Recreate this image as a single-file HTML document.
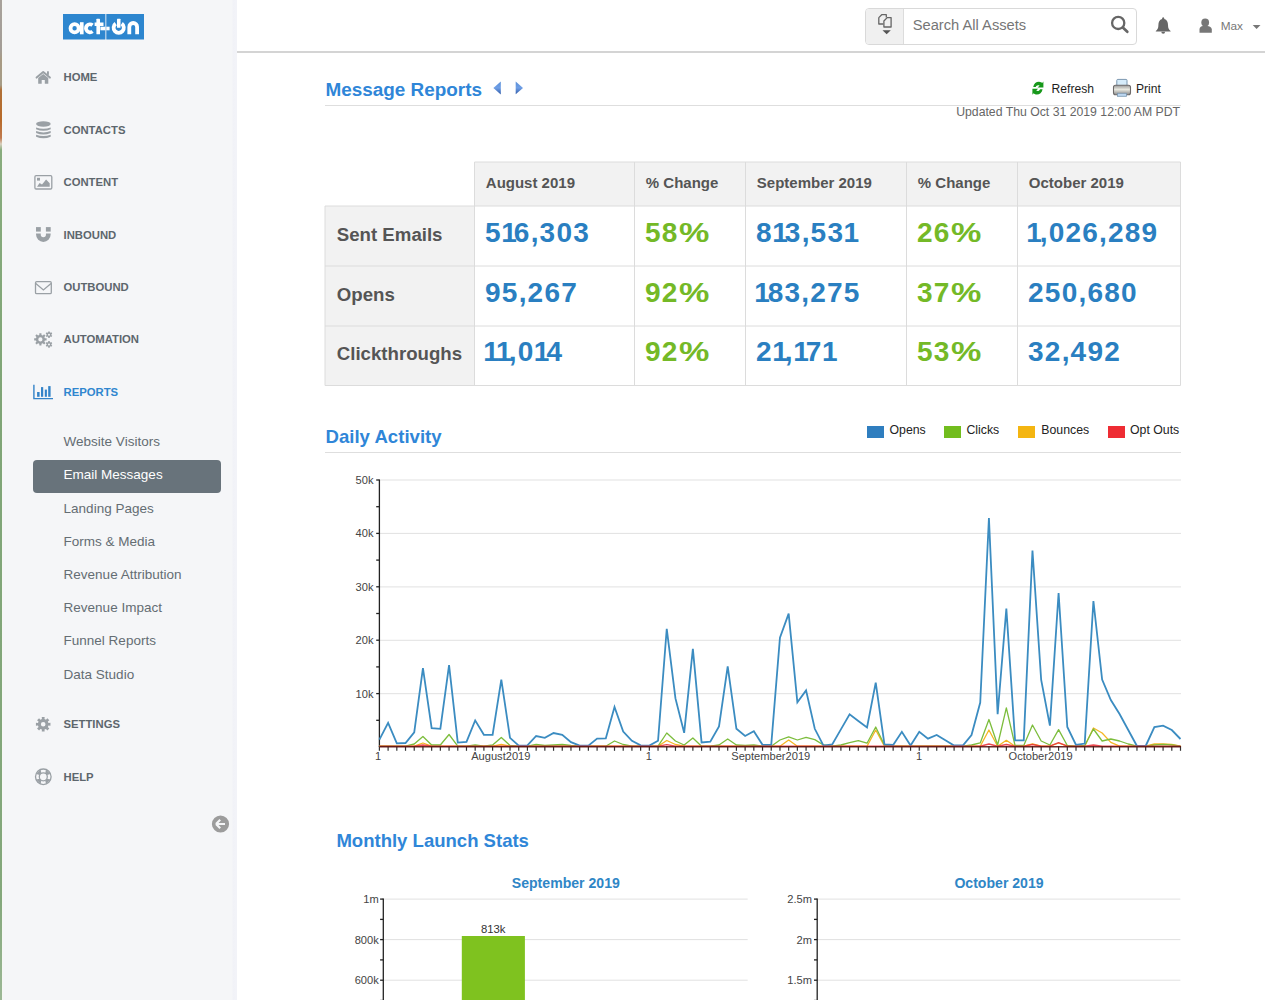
<!DOCTYPE html><html><head><meta charset="utf-8"><style>
*{margin:0;padding:0;box-sizing:border-box}
html,body{width:1265px;height:1000px;overflow:hidden;background:#fff;font-family:"Liberation Sans",sans-serif}
.t{position:absolute;line-height:1;white-space:nowrap}
.abs{position:absolute}
.cell{position:absolute}
.hr{position:absolute;height:1px;background:#dedede}
#strip2{position:absolute;left:1.5px;top:0;width:1.5px;height:1000px;background:#f6f8f4}
#side{position:absolute;left:0;top:0;width:237px;height:1000px;background:linear-gradient(90deg,#f5f6f8 0,#f5f6f8 232px,#f1f2f7 233px,#f2f3f8 236.5px)}
#strip{position:absolute;left:0;top:0;width:1.5px;height:1000px;background:linear-gradient(#a8a29c 0,#a39d97 50px,#a89a84 60px,#a59c88 85px,#b07038 90px,#b86a2a 120px,#c07a50 138px,#d8d0c0 144px,#88ac7e 150px,#7fa577 400px,#84a87c 900px,#9cb896 1000px)}
#hl{position:absolute;left:32.5px;top:460.4px;width:188px;height:32.3px;border-radius:4px;background:#68737b}
#hdrline{position:absolute;left:237px;top:51px;width:1028px;height:2px;background:#d4d4d4}
#search{position:absolute;left:865px;top:8px;width:272px;height:37px;border:1px solid #d9d9d9;border-radius:4px;background:#fff;overflow:hidden}
#sleft{position:absolute;left:0;top:0;width:38px;height:100%;background:#f0f0f0;border-right:1px solid #dcdcdc}
</style></head><body><div id="side"></div>
<div id="strip"></div><div id="strip2"></div>
<svg class="abs" style="left:63px;top:14px" width="81" height="26" viewBox="0 0 81 26">
<rect x="0" y="0" width="42.4" height="25.5" fill="#2d86cf"/>
<rect x="43.3" y="0" width="37.7" height="25.5" fill="#2d86cf"/>
<g fill="none" stroke="#fff" stroke-width="3.8">
<circle cx="11.6" cy="14.3" r="4.1"/>
<path d="M29.5 11.2 A4 4 0 1 0 29.5 17.4"/>
<path d="M52.7 9.6 A5.1 5.1 0 1 0 58.7 9.6"/>
<path d="M66.3 20.3 V12.9 A3.9 3.9 0 0 1 74.1 12.9 V20.3"/>
</g>
<g fill="#fff">
<rect x="16.9" y="8.2" width="3.7" height="12.1"/>
<rect x="33.4" y="4.7" width="3.6" height="15.6" rx="0.6"/>
<rect x="31.6" y="8.5" width="8.9" height="3.5"/>
<rect x="37.4" y="12.7" width="5" height="3.6"/>
<rect x="43.3" y="12.7" width="3.3" height="3.6"/>
<rect x="54" y="4.8" width="3.5" height="9" rx="0.5"/>
</g>
</svg>

<div class="t" style="left:63.50px;top:72px;font-size:11.3px;color:#5d666d;font-weight:bold;">HOME</div>
<div class="t" style="left:63.50px;top:125px;font-size:11.3px;color:#5d666d;font-weight:bold;">CONTACTS</div>
<div class="t" style="left:63.50px;top:177px;font-size:11.3px;color:#5d666d;font-weight:bold;">CONTENT</div>
<div class="t" style="left:63.50px;top:230px;font-size:11.3px;color:#5d666d;font-weight:bold;">INBOUND</div>
<div class="t" style="left:63.50px;top:282px;font-size:11.3px;color:#5d666d;font-weight:bold;">OUTBOUND</div>
<div class="t" style="left:63.50px;top:334px;font-size:11.3px;color:#5d666d;font-weight:bold;">AUTOMATION</div>
<div class="t" style="left:63.50px;top:387px;font-size:11.3px;color:#2f86cf;font-weight:bold;">REPORTS</div>
<div class="t" style="left:63.50px;top:719px;font-size:11.3px;color:#5d666d;font-weight:bold;">SETTINGS</div>
<div class="t" style="left:63.50px;top:772px;font-size:11.3px;color:#5d666d;font-weight:bold;">HELP</div>
<div id="hl"></div>
<div class="t" style="left:63.60px;top:435px;font-size:13.5px;color:#646d73;">Website Visitors</div>
<div class="t" style="left:63.60px;top:468px;font-size:13.5px;color:#ffffff;">Email Messages</div>
<div class="t" style="left:63.60px;top:502px;font-size:13.5px;color:#646d73;">Landing Pages</div>
<div class="t" style="left:63.60px;top:535px;font-size:13.5px;color:#646d73;">Forms &amp; Media</div>
<div class="t" style="left:63.60px;top:568px;font-size:13.5px;color:#646d73;">Revenue Attribution</div>
<div class="t" style="left:63.60px;top:601px;font-size:13.5px;color:#646d73;">Revenue Impact</div>
<div class="t" style="left:63.60px;top:634px;font-size:13.5px;color:#646d73;">Funnel Reports</div>
<div class="t" style="left:63.60px;top:668px;font-size:13.5px;color:#646d73;">Data Studio</div>
<svg class="abs" style="left:0;top:0" width="237" height="1000">
<polyline points="36.6,77.6 43.2,72 49.9,77.6" fill="none" stroke="#9aa0a5" stroke-width="2" stroke-linecap="round" stroke-linejoin="round"/>
<rect x="47" y="71.3" width="1.9" height="3.6" fill="#9aa0a5"/>
<path d="M38.2 83.7 L38.2 78 L43.2 73.9 L48.3 78 L48.3 83.7 L44.8 83.7 L44.8 80 L41.7 80 L41.7 83.7 Z" fill="#9aa0a5"/>
<ellipse cx="43.4" cy="124" rx="7.3" ry="2.7" fill="#9aa0a5"/>
<path d="M36.1 127.4 Q43.4 130.0 50.7 127.4 L50.7 129.3 Q43.4 132.4 36.1 129.3 Z" fill="#9aa0a5"/>
<path d="M36.1 131.1 Q43.4 133.7 50.7 131.1 L50.7 133.0 Q43.4 136.1 36.1 133.0 Z" fill="#9aa0a5"/>
<path d="M36.1 134.8 Q43.4 137.4 50.7 134.8 L50.7 136.70000000000002 Q43.4 139.8 36.1 136.70000000000002 Z" fill="#9aa0a5"/>
<rect x="34.9" y="175.7" width="16.9" height="13.3" rx="1.2" fill="none" stroke="#9aa0a5" stroke-width="1.3"/>
<rect x="37" y="177.8" width="3" height="2.8" fill="#9aa0a5"/>
<path d="M37 186.8 L39.6 183.1 L42 184.6 L46.1 179.5 L49.7 183.3 L49.7 186.8 Z" fill="#9aa0a5"/>
<rect x="36" y="227.1" width="4.8" height="4.5" fill="#9aa0a5"/>
<rect x="45.9" y="227.1" width="4.8" height="4.5" fill="#9aa0a5"/>
<path d="M38.4 233.6 V234.6 A4.95 4.95 0 0 0 48.3 234.6 V233.6" fill="none" stroke="#9aa0a5" stroke-width="4.7"/>
<rect x="35.5" y="281.7" width="15.8" height="12" rx="1.2" fill="none" stroke="#9aa0a5" stroke-width="1.3"/>
<polyline points="35.8,283.6 43.4,290 51,283.6" fill="none" stroke="#9aa0a5" stroke-width="1.3"/>
<path fill-rule="evenodd" d="M39.29 334.94 L39.37 333.19 L41.43 333.19 L41.51 334.94 L42.77 335.46 L44.06 334.27 L45.53 335.74 L44.34 337.03 L44.86 338.29 L46.61 338.37 L46.61 340.43 L44.86 340.51 L44.34 341.77 L45.53 343.06 L44.06 344.53 L42.77 343.34 L41.51 343.86 L41.43 345.61 L39.37 345.61 L39.29 343.86 L38.03 343.34 L36.74 344.53 L35.27 343.06 L36.46 341.77 L35.94 340.51 L34.19 340.43 L34.19 338.37 L35.94 338.29 L36.46 337.03 L35.27 335.74 L36.74 334.27 L38.03 335.46 Z M42.50 339.40 A2.1 2.1 0 1 0 38.30 339.40 A2.1 2.1 0 1 0 42.50 339.40 Z" fill="#9aa0a5"/>
<path fill-rule="evenodd" d="M48.20 332.33 L48.21 331.39 L49.79 331.39 L49.80 332.33 L50.65 332.82 L51.47 332.36 L52.26 333.73 L51.45 334.21 L51.45 335.19 L52.26 335.67 L51.47 337.04 L50.65 336.58 L49.80 337.07 L49.79 338.01 L48.21 338.01 L48.20 337.07 L47.35 336.58 L46.53 337.04 L45.74 335.67 L46.55 335.19 L46.55 334.21 L45.74 333.73 L46.53 332.36 L47.35 332.82 Z M50.00 334.70 A1.0 1.0 0 1 0 48.00 334.70 A1.0 1.0 0 1 0 50.00 334.70 Z" fill="#9aa0a5"/>
<path fill-rule="evenodd" d="M48.20 342.03 L48.21 341.09 L49.79 341.09 L49.80 342.03 L50.65 342.52 L51.47 342.06 L52.26 343.43 L51.45 343.91 L51.45 344.89 L52.26 345.37 L51.47 346.74 L50.65 346.28 L49.80 346.77 L49.79 347.71 L48.21 347.71 L48.20 346.77 L47.35 346.28 L46.53 346.74 L45.74 345.37 L46.55 344.89 L46.55 343.91 L45.74 343.43 L46.53 342.06 L47.35 342.52 Z M50.00 344.40 A1.0 1.0 0 1 0 48.00 344.40 A1.0 1.0 0 1 0 50.00 344.40 Z" fill="#9aa0a5"/>
<path d="M33.2 384.7 H34.6 V397.9 H53 V399.3 H33.2 Z" fill="#3483c8"/>
<rect x="37.1" y="392" width="2.5" height="4.8" fill="#3483c8"/>
<rect x="41" y="387.1" width="2.2" height="9.7" fill="#3483c8"/>
<rect x="44.8" y="389.6" width="2.1" height="7.2" fill="#3483c8"/>
<rect x="48.2" y="386.1" width="2.4" height="10.7" fill="#3483c8"/>
<path fill-rule="evenodd" d="M41.90 719.06 L41.76 717.04 L44.64 717.04 L44.50 719.06 L45.99 719.67 L47.31 718.15 L49.35 720.19 L47.83 721.51 L48.44 723.00 L50.46 722.86 L50.46 725.74 L48.44 725.60 L47.83 727.09 L49.35 728.41 L47.31 730.45 L45.99 728.93 L44.50 729.54 L44.64 731.56 L41.76 731.56 L41.90 729.54 L40.41 728.93 L39.09 730.45 L37.05 728.41 L38.57 727.09 L37.96 725.60 L35.94 725.74 L35.94 722.86 L37.96 723.00 L38.57 721.51 L37.05 720.19 L39.09 718.15 L40.41 719.67 Z M45.50 724.30 A2.3 2.3 0 1 0 40.90 724.30 A2.3 2.3 0 1 0 45.50 724.30 Z" fill="#9aa0a5"/>
<circle cx="43.3" cy="776.8" r="7.8" fill="none" stroke="#9aa0a5" stroke-width="1.3"/>
<circle cx="43.3" cy="776.8" r="4.0" fill="none" stroke="#9aa0a5" stroke-width="1.3"/>
<path d="M46.93 778.71 L50.49 779.55 L46.05 783.99 L45.21 780.43 Z" fill="#9aa0a5"/>
<path d="M41.39 780.43 L40.55 783.99 L36.11 779.55 L39.67 778.71 Z" fill="#9aa0a5"/>
<path d="M39.67 774.89 L36.11 774.05 L40.55 769.61 L41.39 773.17 Z" fill="#9aa0a5"/>
<path d="M45.21 773.17 L46.05 769.61 L50.49 774.05 L46.93 774.89 Z" fill="#9aa0a5"/>
<circle cx="220.5" cy="824" r="8.6" fill="#9c9c9c"/>
<path d="M216 824 L220.2 819.8 M216 824 L220.2 828.2 M216.2 824 H225" fill="none" stroke="#f4f5f7" stroke-width="2.2" stroke-linecap="butt"/>
</svg>
<div id="hdrline"></div>
<div id="search"><div id="sleft"></div></div>
<div class="t" style="left:912.70px;top:18px;font-size:14.7px;color:#767676;">Search All Assets</div>
<div class="t" style="left:1220.70px;top:21px;font-size:11.8px;color:#777;">Max</div>
<svg class="abs" style="left:0;top:0" width="1265" height="60">
<path d="M878.8 17.6 L881.7 14.7 H886.3 V17.4 M883.4 24 H878.8 V17.6" fill="none" stroke="#666" stroke-width="1.3" stroke-linejoin="round"/>
<path d="M883.9 21 L887.2 17.6 H891.1 V27 H883.9 Z" fill="#f0f0f0" stroke="#666" stroke-width="1.3" stroke-linejoin="round"/>
<path d="M882.5 30.2 H890.8 L886.65 34.2 Z" fill="#555"/>
<circle cx="1118.2" cy="22.9" r="6.1" fill="none" stroke="#666" stroke-width="2.3"/>
<path d="M1122.8 27.6 L1127.3 31.8" stroke="#666" stroke-width="2.7" stroke-linecap="round"/>
<path d="M1163.2 17.3 C1164.2 17.3 1164.3 18.6 1164.3 19 C1167 19.8 1168 22 1168 25 C1168 28.5 1169 29.5 1170.6 31 L1170.6 31.6 L1155.8 31.6 L1155.8 31 C1157.4 29.5 1158.4 28.5 1158.4 25 C1158.4 22 1159.4 19.8 1162.1 19 C1162.1 18.6 1162.2 17.3 1163.2 17.3 Z" fill="#666"/>
<path d="M1161.3 31.8 A1.9 1.9 0 0 0 1165.1 31.8 Z" fill="#666"/>
<circle cx="1205.2" cy="22.5" r="3.9" fill="#777"/>
<path d="M1199.5 32.8 V29.5 C1199.5 27.2 1201 26 1203 26 H1207.3 C1209.5 26 1211.8 27.2 1211.8 29.5 V32.8 Z" fill="#777"/>
<path d="M1252.7 25 H1260.5 L1256.6 29.1 Z" fill="#777"/>
</svg>
<svg class="abs" style="left:0;top:0" width="1265" height="130">
<defs>
<linearGradient id="ag" x1="0" y1="0" x2="0" y2="1"><stop offset="0" stop-color="#5a8fd8"/><stop offset="0.5" stop-color="#6f9fe6"/><stop offset="1" stop-color="#2f5aa8"/></linearGradient>
<linearGradient id="pg" x1="0" y1="0" x2="0" y2="1"><stop offset="0" stop-color="#9a9a9a"/><stop offset="0.45" stop-color="#e8e8e0"/><stop offset="1" stop-color="#8a8a8a"/></linearGradient>
</defs>
<path d="M493.4 87.9 L500.8 81.4 L500.8 94.4 Z" fill="url(#ag)"/>
<path d="M523 87.9 L515.7 81.6 L515.7 94.2 Z" fill="url(#ag)"/>
<path d="M1033.2 87 C1033.8 83.4 1036.4 81.6 1039 81.7 C1040.6 81.8 1041.6 82.4 1042.2 83 L1043.4 81.4 L1043.4 87.4 L1037.6 87.4 L1039.6 85.6 C1038 84.6 1036.2 85.4 1035.8 87 Z" fill="#17981a"/>
<path d="M1042.6 89.2 C1042 92.8 1039.4 94.6 1036.8 94.5 C1035.2 94.4 1034.2 93.8 1033.6 93.2 L1032.4 94.8 L1032.4 88.8 L1038.2 88.8 L1036.2 90.6 C1037.8 91.6 1039.6 90.8 1040 89.2 Z" fill="#17981a"/>
<rect x="1116.8" y="79.4" width="10.2" height="8" rx="1" fill="#d6ecfa" stroke="#7b97b0" stroke-width="1"/>
<rect x="1113.5" y="85.2" width="17" height="9.6" rx="2" fill="url(#pg)" stroke="#6e6a6a" stroke-width="1.1"/>
<rect x="1117.6" y="93.3" width="8.8" height="3" fill="#bcd6f0" stroke="#7b97b0" stroke-width="0.8"/>
</svg>

<div class="t" style="left:325.50px;top:81px;font-size:18.9px;color:#2f86d8;font-weight:bold;">Message Reports</div>
<div class="hr" style="left:325px;top:105px;width:855.5px"></div>
<div class="t" style="left:1051.60px;top:83px;font-size:12.1px;color:#1e1e1e;">Refresh</div>
<div class="t" style="left:1135.90px;top:83px;font-size:12.1px;color:#1e1e1e;">Print</div>
<div class="t" style="right:85.00px;top:106px;font-size:12.26px;color:#666;">Updated Thu Oct 31 2019 12:00 AM PDT</div>
<div class="cell" style="left:474.5px;top:162px;width:160.0px;height:44px;background:#f2f2f2"></div>
<div class="cell" style="left:634.5px;top:162px;width:111.0px;height:44px;background:#f2f2f2"></div>
<div class="cell" style="left:745.5px;top:162px;width:161.0px;height:44px;background:#f2f2f2"></div>
<div class="cell" style="left:906.5px;top:162px;width:111.0px;height:44px;background:#f2f2f2"></div>
<div class="cell" style="left:1017.5px;top:162px;width:163.0px;height:44px;background:#f2f2f2"></div>
<div class="cell" style="left:325px;top:206px;width:149.5px;height:60px;background:#f2f2f2"></div>
<div class="cell" style="left:474.5px;top:206px;width:160.0px;height:60px;background:#fff"></div>
<div class="cell" style="left:634.5px;top:206px;width:111.0px;height:60px;background:#fff"></div>
<div class="cell" style="left:745.5px;top:206px;width:161.0px;height:60px;background:#fff"></div>
<div class="cell" style="left:906.5px;top:206px;width:111.0px;height:60px;background:#fff"></div>
<div class="cell" style="left:1017.5px;top:206px;width:163.0px;height:60px;background:#fff"></div>
<div class="cell" style="left:325px;top:266px;width:149.5px;height:60px;background:#f2f2f2"></div>
<div class="cell" style="left:474.5px;top:266px;width:160.0px;height:60px;background:#fff"></div>
<div class="cell" style="left:634.5px;top:266px;width:111.0px;height:60px;background:#fff"></div>
<div class="cell" style="left:745.5px;top:266px;width:161.0px;height:60px;background:#fff"></div>
<div class="cell" style="left:906.5px;top:266px;width:111.0px;height:60px;background:#fff"></div>
<div class="cell" style="left:1017.5px;top:266px;width:163.0px;height:60px;background:#fff"></div>
<div class="cell" style="left:325px;top:326px;width:149.5px;height:59.5px;background:#f2f2f2"></div>
<div class="cell" style="left:474.5px;top:326px;width:160.0px;height:59.5px;background:#fff"></div>
<div class="cell" style="left:634.5px;top:326px;width:111.0px;height:59.5px;background:#fff"></div>
<div class="cell" style="left:745.5px;top:326px;width:161.0px;height:59.5px;background:#fff"></div>
<div class="cell" style="left:906.5px;top:326px;width:111.0px;height:59.5px;background:#fff"></div>
<div class="cell" style="left:1017.5px;top:326px;width:163.0px;height:59.5px;background:#fff"></div>
<svg class="abs" style="left:0;top:0" width="1265" height="1000"><line x1="474.5" y1="162" x2="1180.5" y2="162" stroke="#dcdcdc" stroke-width="1"/><line x1="325" y1="206" x2="1180.5" y2="206" stroke="#dcdcdc" stroke-width="1"/><line x1="325" y1="266" x2="1180.5" y2="266" stroke="#dcdcdc" stroke-width="1"/><line x1="325" y1="326" x2="1180.5" y2="326" stroke="#dcdcdc" stroke-width="1"/><line x1="325" y1="385.5" x2="1180.5" y2="385.5" stroke="#dcdcdc" stroke-width="1"/><line x1="325" y1="206" x2="325" y2="385.5" stroke="#dcdcdc" stroke-width="1"/><line x1="474.5" y1="162" x2="474.5" y2="385.5" stroke="#dcdcdc" stroke-width="1"/><line x1="634.5" y1="162" x2="634.5" y2="385.5" stroke="#dcdcdc" stroke-width="1"/><line x1="745.5" y1="162" x2="745.5" y2="385.5" stroke="#dcdcdc" stroke-width="1"/><line x1="906.5" y1="162" x2="906.5" y2="385.5" stroke="#dcdcdc" stroke-width="1"/><line x1="1017.5" y1="162" x2="1017.5" y2="385.5" stroke="#dcdcdc" stroke-width="1"/><line x1="1180.5" y1="162" x2="1180.5" y2="385.5" stroke="#dcdcdc" stroke-width="1"/></svg>
<div class="t" style="left:485.80px;top:175px;font-size:15px;color:#555;font-weight:bold;">August 2019</div>
<div class="t" style="left:645.80px;top:175px;font-size:15px;color:#555;font-weight:bold;">% Change</div>
<div class="t" style="left:756.80px;top:175px;font-size:15px;color:#555;font-weight:bold;">September 2019</div>
<div class="t" style="left:917.80px;top:175px;font-size:15px;color:#555;font-weight:bold;">% Change</div>
<div class="t" style="left:1028.80px;top:175px;font-size:15px;color:#555;font-weight:bold;">October 2019</div>
<div class="t" style="left:336.80px;top:226px;font-size:18.65px;color:#555;font-weight:bold;">Sent Emails</div>
<div class="t" style="left:485.10px;top:219px;font-size:28px;color:#2a7fc1;font-weight:bold;letter-spacing:1.2px;">5<span style="margin-left:-0.6px;letter-spacing:-3.0px">1</span>6,303</div>
<div class="t" style="left:645.10px;top:219px;font-size:28px;color:#74b927;font-weight:bold;letter-spacing:1.2px;">58<span style="display:inline-block;transform:scaleX(1.22);transform-origin:0 0">%</span></div>
<div class="t" style="left:756.10px;top:219px;font-size:28px;color:#2a7fc1;font-weight:bold;letter-spacing:1.2px;">8<span style="margin-left:-0.6px;letter-spacing:-3.0px">1</span>3,53<span style="margin-left:-0.6px;letter-spacing:-3.0px">1</span></div>
<div class="t" style="left:917.10px;top:219px;font-size:28px;color:#74b927;font-weight:bold;letter-spacing:1.2px;">26<span style="display:inline-block;transform:scaleX(1.22);transform-origin:0 0">%</span></div>
<div class="t" style="left:1028.10px;top:219px;font-size:28px;color:#2a7fc1;font-weight:bold;letter-spacing:1.2px;"><span style="margin-left:-1.8px;letter-spacing:-2.2px">1</span>,026,289</div>
<div class="t" style="left:336.80px;top:286px;font-size:18.65px;color:#555;font-weight:bold;">Opens</div>
<div class="t" style="left:485.10px;top:279px;font-size:28px;color:#2a7fc1;font-weight:bold;letter-spacing:1.2px;">95,267</div>
<div class="t" style="left:645.10px;top:279px;font-size:28px;color:#74b927;font-weight:bold;letter-spacing:1.2px;">92<span style="display:inline-block;transform:scaleX(1.22);transform-origin:0 0">%</span></div>
<div class="t" style="left:756.10px;top:279px;font-size:28px;color:#2a7fc1;font-weight:bold;letter-spacing:1.2px;"><span style="margin-left:-1.8px;letter-spacing:-2.2px">1</span>83,275</div>
<div class="t" style="left:917.10px;top:279px;font-size:28px;color:#74b927;font-weight:bold;letter-spacing:1.2px;">37<span style="display:inline-block;transform:scaleX(1.22);transform-origin:0 0">%</span></div>
<div class="t" style="left:1028.10px;top:279px;font-size:28px;color:#2a7fc1;font-weight:bold;letter-spacing:1.2px;">250,680</div>
<div class="t" style="left:336.80px;top:345px;font-size:18.65px;color:#555;font-weight:bold;">Clickthroughs</div>
<div class="t" style="left:485.10px;top:338px;font-size:28px;color:#2a7fc1;font-weight:bold;letter-spacing:1.2px;"><span style="margin-left:-1.8px;letter-spacing:-2.2px">1</span><span style="margin-left:-0.6px;letter-spacing:-3.0px">1</span>,0<span style="margin-left:-0.6px;letter-spacing:-3.0px">1</span>4</div>
<div class="t" style="left:645.10px;top:338px;font-size:28px;color:#74b927;font-weight:bold;letter-spacing:1.2px;">92<span style="display:inline-block;transform:scaleX(1.22);transform-origin:0 0">%</span></div>
<div class="t" style="left:756.10px;top:338px;font-size:28px;color:#2a7fc1;font-weight:bold;letter-spacing:1.2px;">2<span style="margin-left:-0.6px;letter-spacing:-3.0px">1</span>,<span style="margin-left:-0.6px;letter-spacing:-3.0px">1</span>7<span style="margin-left:-0.6px;letter-spacing:-3.0px">1</span></div>
<div class="t" style="left:917.10px;top:338px;font-size:28px;color:#74b927;font-weight:bold;letter-spacing:1.2px;">53<span style="display:inline-block;transform:scaleX(1.22);transform-origin:0 0">%</span></div>
<div class="t" style="left:1028.10px;top:338px;font-size:28px;color:#2a7fc1;font-weight:bold;letter-spacing:1.2px;">32,492</div>
<div class="t" style="left:325.50px;top:428px;font-size:18.6px;color:#2f86d8;font-weight:bold;">Daily Activity</div>
<div class="hr" style="left:325px;top:452px;width:855.5px"></div>
<div class="abs" style="left:867.3px;top:425.8px;width:17px;height:11.8px;background:#2f7ebf"></div>
<div class="t" style="left:889.50px;top:424px;font-size:12.3px;color:#222;">Opens</div>
<div class="abs" style="left:943.5px;top:425.8px;width:17px;height:11.8px;background:#72bd1e"></div>
<div class="t" style="left:966.40px;top:424px;font-size:12.3px;color:#222;">Clicks</div>
<div class="abs" style="left:1018.4px;top:425.8px;width:17px;height:11.8px;background:#f4b511"></div>
<div class="t" style="left:1041.30px;top:424px;font-size:12.3px;color:#222;">Bounces</div>
<div class="abs" style="left:1107.8px;top:425.8px;width:17px;height:11.8px;background:#ee2c33"></div>
<div class="t" style="left:1130.00px;top:424px;font-size:12.3px;color:#222;">Opt Outs</div>
<svg class="abs" style="left:0;top:0" width="1265" height="1000">
<line x1="380" y1="480" x2="1181" y2="480" stroke="#e1e1e1" stroke-width="1"/>
<line x1="380" y1="533.4" x2="1181" y2="533.4" stroke="#e1e1e1" stroke-width="1"/>
<line x1="380" y1="586.9" x2="1181" y2="586.9" stroke="#e1e1e1" stroke-width="1"/>
<line x1="380" y1="640.3" x2="1181" y2="640.3" stroke="#e1e1e1" stroke-width="1"/>
<line x1="380" y1="693.7" x2="1181" y2="693.7" stroke="#e1e1e1" stroke-width="1"/>
<line x1="379.4" y1="479.5" x2="379.4" y2="747" stroke="#222" stroke-width="1.3"/>
<line x1="376.2" y1="480.0" x2="379.4" y2="480.0" stroke="#222" stroke-width="1.3"/>
<line x1="376.2" y1="506.7" x2="379.4" y2="506.7" stroke="#222" stroke-width="1.3"/>
<line x1="376.2" y1="533.4" x2="379.4" y2="533.4" stroke="#222" stroke-width="1.3"/>
<line x1="376.2" y1="560.1" x2="379.4" y2="560.1" stroke="#222" stroke-width="1.3"/>
<line x1="376.2" y1="586.8" x2="379.4" y2="586.8" stroke="#222" stroke-width="1.3"/>
<line x1="376.2" y1="613.5" x2="379.4" y2="613.5" stroke="#222" stroke-width="1.3"/>
<line x1="376.2" y1="640.2" x2="379.4" y2="640.2" stroke="#222" stroke-width="1.3"/>
<line x1="376.2" y1="666.9" x2="379.4" y2="666.9" stroke="#222" stroke-width="1.3"/>
<line x1="376.2" y1="693.6" x2="379.4" y2="693.6" stroke="#222" stroke-width="1.3"/>
<line x1="376.2" y1="720.3" x2="379.4" y2="720.3" stroke="#222" stroke-width="1.3"/>
<line x1="379.40" y1="746" x2="379.40" y2="750.8" stroke="#333" stroke-width="1.2"/>
<line x1="388.11" y1="746" x2="388.11" y2="750.8" stroke="#333" stroke-width="1.2"/>
<line x1="396.82" y1="746" x2="396.82" y2="750.8" stroke="#333" stroke-width="1.2"/>
<line x1="405.52" y1="746" x2="405.52" y2="750.8" stroke="#333" stroke-width="1.2"/>
<line x1="414.23" y1="746" x2="414.23" y2="750.8" stroke="#333" stroke-width="1.2"/>
<line x1="422.94" y1="746" x2="422.94" y2="750.8" stroke="#333" stroke-width="1.2"/>
<line x1="431.65" y1="746" x2="431.65" y2="750.8" stroke="#333" stroke-width="1.2"/>
<line x1="440.35" y1="746" x2="440.35" y2="750.8" stroke="#333" stroke-width="1.2"/>
<line x1="449.06" y1="746" x2="449.06" y2="750.8" stroke="#333" stroke-width="1.2"/>
<line x1="457.77" y1="746" x2="457.77" y2="750.8" stroke="#333" stroke-width="1.2"/>
<line x1="466.48" y1="746" x2="466.48" y2="750.8" stroke="#333" stroke-width="1.2"/>
<line x1="475.18" y1="746" x2="475.18" y2="750.8" stroke="#333" stroke-width="1.2"/>
<line x1="483.89" y1="746" x2="483.89" y2="750.8" stroke="#333" stroke-width="1.2"/>
<line x1="492.60" y1="746" x2="492.60" y2="750.8" stroke="#333" stroke-width="1.2"/>
<line x1="501.31" y1="746" x2="501.31" y2="750.8" stroke="#333" stroke-width="1.2"/>
<line x1="510.01" y1="746" x2="510.01" y2="750.8" stroke="#333" stroke-width="1.2"/>
<line x1="518.72" y1="746" x2="518.72" y2="750.8" stroke="#333" stroke-width="1.2"/>
<line x1="527.43" y1="746" x2="527.43" y2="750.8" stroke="#333" stroke-width="1.2"/>
<line x1="536.14" y1="746" x2="536.14" y2="750.8" stroke="#333" stroke-width="1.2"/>
<line x1="544.84" y1="746" x2="544.84" y2="750.8" stroke="#333" stroke-width="1.2"/>
<line x1="553.55" y1="746" x2="553.55" y2="750.8" stroke="#333" stroke-width="1.2"/>
<line x1="562.26" y1="746" x2="562.26" y2="750.8" stroke="#333" stroke-width="1.2"/>
<line x1="570.97" y1="746" x2="570.97" y2="750.8" stroke="#333" stroke-width="1.2"/>
<line x1="579.67" y1="746" x2="579.67" y2="750.8" stroke="#333" stroke-width="1.2"/>
<line x1="588.38" y1="746" x2="588.38" y2="750.8" stroke="#333" stroke-width="1.2"/>
<line x1="597.09" y1="746" x2="597.09" y2="750.8" stroke="#333" stroke-width="1.2"/>
<line x1="605.80" y1="746" x2="605.80" y2="750.8" stroke="#333" stroke-width="1.2"/>
<line x1="614.51" y1="746" x2="614.51" y2="750.8" stroke="#333" stroke-width="1.2"/>
<line x1="623.21" y1="746" x2="623.21" y2="750.8" stroke="#333" stroke-width="1.2"/>
<line x1="631.92" y1="746" x2="631.92" y2="750.8" stroke="#333" stroke-width="1.2"/>
<line x1="640.63" y1="746" x2="640.63" y2="750.8" stroke="#333" stroke-width="1.2"/>
<line x1="649.34" y1="746" x2="649.34" y2="750.8" stroke="#333" stroke-width="1.2"/>
<line x1="658.04" y1="746" x2="658.04" y2="750.8" stroke="#333" stroke-width="1.2"/>
<line x1="666.75" y1="746" x2="666.75" y2="750.8" stroke="#333" stroke-width="1.2"/>
<line x1="675.46" y1="746" x2="675.46" y2="750.8" stroke="#333" stroke-width="1.2"/>
<line x1="684.17" y1="746" x2="684.17" y2="750.8" stroke="#333" stroke-width="1.2"/>
<line x1="692.87" y1="746" x2="692.87" y2="750.8" stroke="#333" stroke-width="1.2"/>
<line x1="701.58" y1="746" x2="701.58" y2="750.8" stroke="#333" stroke-width="1.2"/>
<line x1="710.29" y1="746" x2="710.29" y2="750.8" stroke="#333" stroke-width="1.2"/>
<line x1="719.00" y1="746" x2="719.00" y2="750.8" stroke="#333" stroke-width="1.2"/>
<line x1="727.70" y1="746" x2="727.70" y2="750.8" stroke="#333" stroke-width="1.2"/>
<line x1="736.41" y1="746" x2="736.41" y2="750.8" stroke="#333" stroke-width="1.2"/>
<line x1="745.12" y1="746" x2="745.12" y2="750.8" stroke="#333" stroke-width="1.2"/>
<line x1="753.83" y1="746" x2="753.83" y2="750.8" stroke="#333" stroke-width="1.2"/>
<line x1="762.53" y1="746" x2="762.53" y2="750.8" stroke="#333" stroke-width="1.2"/>
<line x1="771.24" y1="746" x2="771.24" y2="750.8" stroke="#333" stroke-width="1.2"/>
<line x1="779.95" y1="746" x2="779.95" y2="750.8" stroke="#333" stroke-width="1.2"/>
<line x1="788.66" y1="746" x2="788.66" y2="750.8" stroke="#333" stroke-width="1.2"/>
<line x1="797.37" y1="746" x2="797.37" y2="750.8" stroke="#333" stroke-width="1.2"/>
<line x1="806.07" y1="746" x2="806.07" y2="750.8" stroke="#333" stroke-width="1.2"/>
<line x1="814.78" y1="746" x2="814.78" y2="750.8" stroke="#333" stroke-width="1.2"/>
<line x1="823.49" y1="746" x2="823.49" y2="750.8" stroke="#333" stroke-width="1.2"/>
<line x1="832.20" y1="746" x2="832.20" y2="750.8" stroke="#333" stroke-width="1.2"/>
<line x1="840.90" y1="746" x2="840.90" y2="750.8" stroke="#333" stroke-width="1.2"/>
<line x1="849.61" y1="746" x2="849.61" y2="750.8" stroke="#333" stroke-width="1.2"/>
<line x1="858.32" y1="746" x2="858.32" y2="750.8" stroke="#333" stroke-width="1.2"/>
<line x1="867.03" y1="746" x2="867.03" y2="750.8" stroke="#333" stroke-width="1.2"/>
<line x1="875.73" y1="746" x2="875.73" y2="750.8" stroke="#333" stroke-width="1.2"/>
<line x1="884.44" y1="746" x2="884.44" y2="750.8" stroke="#333" stroke-width="1.2"/>
<line x1="893.15" y1="746" x2="893.15" y2="750.8" stroke="#333" stroke-width="1.2"/>
<line x1="901.86" y1="746" x2="901.86" y2="750.8" stroke="#333" stroke-width="1.2"/>
<line x1="910.56" y1="746" x2="910.56" y2="750.8" stroke="#333" stroke-width="1.2"/>
<line x1="919.27" y1="746" x2="919.27" y2="750.8" stroke="#333" stroke-width="1.2"/>
<line x1="927.98" y1="746" x2="927.98" y2="750.8" stroke="#333" stroke-width="1.2"/>
<line x1="936.69" y1="746" x2="936.69" y2="750.8" stroke="#333" stroke-width="1.2"/>
<line x1="945.39" y1="746" x2="945.39" y2="750.8" stroke="#333" stroke-width="1.2"/>
<line x1="954.10" y1="746" x2="954.10" y2="750.8" stroke="#333" stroke-width="1.2"/>
<line x1="962.81" y1="746" x2="962.81" y2="750.8" stroke="#333" stroke-width="1.2"/>
<line x1="971.52" y1="746" x2="971.52" y2="750.8" stroke="#333" stroke-width="1.2"/>
<line x1="980.23" y1="746" x2="980.23" y2="750.8" stroke="#333" stroke-width="1.2"/>
<line x1="988.93" y1="746" x2="988.93" y2="750.8" stroke="#333" stroke-width="1.2"/>
<line x1="997.64" y1="746" x2="997.64" y2="750.8" stroke="#333" stroke-width="1.2"/>
<line x1="1006.35" y1="746" x2="1006.35" y2="750.8" stroke="#333" stroke-width="1.2"/>
<line x1="1015.06" y1="746" x2="1015.06" y2="750.8" stroke="#333" stroke-width="1.2"/>
<line x1="1023.76" y1="746" x2="1023.76" y2="750.8" stroke="#333" stroke-width="1.2"/>
<line x1="1032.47" y1="746" x2="1032.47" y2="750.8" stroke="#333" stroke-width="1.2"/>
<line x1="1041.18" y1="746" x2="1041.18" y2="750.8" stroke="#333" stroke-width="1.2"/>
<line x1="1049.89" y1="746" x2="1049.89" y2="750.8" stroke="#333" stroke-width="1.2"/>
<line x1="1058.59" y1="746" x2="1058.59" y2="750.8" stroke="#333" stroke-width="1.2"/>
<line x1="1067.30" y1="746" x2="1067.30" y2="750.8" stroke="#333" stroke-width="1.2"/>
<line x1="1076.01" y1="746" x2="1076.01" y2="750.8" stroke="#333" stroke-width="1.2"/>
<line x1="1084.72" y1="746" x2="1084.72" y2="750.8" stroke="#333" stroke-width="1.2"/>
<line x1="1093.42" y1="746" x2="1093.42" y2="750.8" stroke="#333" stroke-width="1.2"/>
<line x1="1102.13" y1="746" x2="1102.13" y2="750.8" stroke="#333" stroke-width="1.2"/>
<line x1="1110.84" y1="746" x2="1110.84" y2="750.8" stroke="#333" stroke-width="1.2"/>
<line x1="1119.55" y1="746" x2="1119.55" y2="750.8" stroke="#333" stroke-width="1.2"/>
<line x1="1128.25" y1="746" x2="1128.25" y2="750.8" stroke="#333" stroke-width="1.2"/>
<line x1="1136.96" y1="746" x2="1136.96" y2="750.8" stroke="#333" stroke-width="1.2"/>
<line x1="1145.67" y1="746" x2="1145.67" y2="750.8" stroke="#333" stroke-width="1.2"/>
<line x1="1154.38" y1="746" x2="1154.38" y2="750.8" stroke="#333" stroke-width="1.2"/>
<line x1="1163.08" y1="746" x2="1163.08" y2="750.8" stroke="#333" stroke-width="1.2"/>
<line x1="1171.79" y1="746" x2="1171.79" y2="750.8" stroke="#333" stroke-width="1.2"/>
<line x1="1180.50" y1="746" x2="1180.50" y2="750.8" stroke="#333" stroke-width="1.2"/>
<path d="M379.40 746.20 L388.11 746.20 L396.82 746.20 L405.52 746.20 L414.23 746.20 L422.94 743.00 L431.65 746.20 L440.35 746.20 L449.06 746.20 L457.77 746.20 L466.48 746.20 L475.18 746.20 L483.89 746.20 L492.60 746.20 L501.31 744.50 L510.01 746.20 L518.72 746.20 L527.43 746.20 L536.14 746.20 L544.84 746.20 L553.55 746.20 L562.26 746.20 L570.97 746.20 L579.67 746.20 L588.38 746.20 L597.09 746.20 L605.80 746.20 L614.51 746.20 L623.21 746.20 L631.92 746.20 L640.63 746.20 L649.34 746.20 L658.04 746.20 L666.75 740.50 L675.46 744.50 L684.17 746.20 L692.87 746.20 L701.58 746.20 L710.29 746.20 L719.00 746.20 L727.70 746.20 L736.41 746.20 L745.12 746.20 L753.83 746.20 L762.53 746.20 L771.24 746.20 L779.95 746.20 L788.66 740.00 L797.37 746.20 L806.07 746.20 L814.78 746.20 L823.49 746.20 L832.20 746.20 L840.90 746.20 L849.61 746.20 L858.32 746.20 L867.03 746.20 L875.73 730.00 L884.44 746.20 L893.15 746.20 L901.86 746.20 L910.56 746.20 L919.27 746.20 L927.98 746.20 L936.69 746.20 L945.39 746.20 L954.10 746.20 L962.81 746.20 L971.52 746.20 L980.23 746.20 L988.93 730.00 L997.64 746.20 L1006.35 740.30 L1015.06 746.20 L1023.76 746.20 L1032.47 744.00 L1041.18 746.20 L1049.89 746.20 L1058.59 743.00 L1067.30 746.20 L1076.01 746.20 L1084.72 746.20 L1093.42 728.00 L1102.13 733.00 L1110.84 742.40 L1119.55 746.20 L1128.25 746.20 L1136.96 746.20 L1145.67 746.20 L1154.38 744.00 L1163.08 744.00 L1171.79 744.50 L1180.50 746.20" fill="none" stroke="#f5b623" stroke-width="1.3" stroke-linejoin="round"/>
<path d="M379.40 746.20 L388.11 746.20 L396.82 746.20 L405.52 746.20 L414.23 744.00 L422.94 736.50 L431.65 745.00 L440.35 745.00 L449.06 734.50 L457.77 746.20 L466.48 746.20 L475.18 745.00 L483.89 746.20 L492.60 745.00 L501.31 737.40 L510.01 745.50 L518.72 746.20 L527.43 746.20 L536.14 744.50 L544.84 745.50 L553.55 745.00 L562.26 744.50 L570.97 745.50 L579.67 746.20 L588.38 746.20 L597.09 746.20 L605.80 746.20 L614.51 741.00 L623.21 744.50 L631.92 746.20 L640.63 746.20 L649.34 746.20 L658.04 746.20 L666.75 733.00 L675.46 741.00 L684.17 745.00 L692.87 738.00 L701.58 746.20 L710.29 746.20 L719.00 745.00 L727.70 739.00 L736.41 745.00 L745.12 745.50 L753.83 745.00 L762.53 746.20 L771.24 746.20 L779.95 740.00 L788.66 736.80 L797.37 740.00 L806.07 737.30 L814.78 739.60 L823.49 745.00 L832.20 746.20 L840.90 745.00 L849.61 742.60 L858.32 740.60 L867.03 743.20 L875.73 727.00 L884.44 745.00 L893.15 746.20 L901.86 746.20 L910.56 746.20 L919.27 746.20 L927.98 746.20 L936.69 746.20 L945.39 746.20 L954.10 746.20 L962.81 746.20 L971.52 745.00 L980.23 742.90 L988.93 719.50 L997.64 745.00 L1006.35 707.80 L1015.06 745.50 L1023.76 745.50 L1032.47 725.00 L1041.18 741.00 L1049.89 745.00 L1058.59 729.60 L1067.30 745.50 L1076.01 746.20 L1084.72 745.50 L1093.42 729.00 L1102.13 741.00 L1110.84 739.00 L1119.55 741.00 L1128.25 744.00 L1136.96 746.20 L1145.67 746.20 L1154.38 745.00 L1163.08 744.50 L1171.79 745.00 L1180.50 746.20" fill="none" stroke="#7cbd3c" stroke-width="1.3" stroke-linejoin="round"/>
<path d="M379.40 739.60 L388.11 722.80 L396.82 743.40 L405.52 743.00 L414.23 732.40 L422.94 668.20 L431.65 728.20 L440.35 728.80 L449.06 665.20 L457.77 742.60 L466.48 741.80 L475.18 720.40 L483.89 734.80 L492.60 734.80 L501.31 679.60 L510.01 737.80 L518.72 745.60 L527.43 745.40 L536.14 736.00 L544.84 737.80 L553.55 733.00 L562.26 734.80 L570.97 742.20 L579.67 745.60 L588.38 745.60 L597.09 738.60 L605.80 738.40 L614.51 706.90 L623.21 731.50 L631.92 740.80 L640.63 745.30 L649.34 745.60 L658.04 740.80 L666.75 628.80 L675.46 698.40 L684.17 732.80 L692.87 648.80 L701.58 742.40 L710.29 741.60 L719.00 726.40 L727.70 666.40 L736.41 728.80 L745.12 736.00 L753.83 731.20 L762.53 744.80 L771.24 744.80 L779.95 637.60 L788.66 613.60 L797.37 702.40 L806.07 690.40 L814.78 728.80 L823.49 745.60 L832.20 744.40 L840.90 729.40 L849.61 714.40 L858.32 721.00 L867.03 727.40 L875.73 682.60 L884.44 744.40 L893.15 745.00 L901.86 731.80 L910.56 745.60 L919.27 731.80 L927.98 738.60 L936.69 735.00 L945.39 740.30 L954.10 745.50 L962.81 745.50 L971.52 735.00 L980.23 702.60 L988.93 518.00 L997.64 714.30 L1006.35 608.60 L1015.06 740.30 L1023.76 740.30 L1032.47 550.50 L1041.18 680.00 L1049.89 725.60 L1058.59 593.00 L1067.30 727.00 L1076.01 745.00 L1084.72 743.60 L1093.42 601.00 L1102.13 679.60 L1110.84 700.00 L1119.55 714.00 L1128.25 730.00 L1136.96 746.00 L1145.67 746.00 L1154.38 727.00 L1163.08 725.60 L1171.79 730.00 L1180.50 739.00" fill="none" stroke="#3b8cc1" stroke-width="1.8" stroke-linejoin="miter"/>
<path d="M379.40 746.20 L388.11 746.20 L396.82 746.20 L405.52 746.20 L414.23 746.20 L422.94 745.00 L431.65 746.20 L440.35 746.20 L449.06 746.20 L457.77 746.20 L466.48 746.20 L475.18 746.20 L483.89 746.20 L492.60 746.20 L501.31 746.20 L510.01 746.20 L518.72 746.20 L527.43 746.20 L536.14 746.20 L544.84 746.20 L553.55 746.20 L562.26 746.20 L570.97 746.20 L579.67 746.20 L588.38 746.20 L597.09 746.20 L605.80 746.20 L614.51 746.20 L623.21 746.20 L631.92 746.20 L640.63 746.20 L649.34 746.20 L658.04 746.20 L666.75 744.60 L675.46 746.20 L684.17 746.20 L692.87 746.20 L701.58 746.20 L710.29 746.20 L719.00 746.20 L727.70 746.20 L736.41 746.20 L745.12 746.20 L753.83 746.20 L762.53 746.20 L771.24 746.20 L779.95 746.20 L788.66 746.20 L797.37 746.20 L806.07 746.20 L814.78 746.20 L823.49 746.20 L832.20 746.20 L840.90 746.20 L849.61 746.20 L858.32 746.20 L867.03 746.20 L875.73 746.20 L884.44 746.20 L893.15 746.20 L901.86 746.20 L910.56 746.20 L919.27 746.20 L927.98 746.20 L936.69 746.20 L945.39 746.20 L954.10 746.20 L962.81 746.20 L971.52 746.20 L980.23 746.20 L988.93 744.00 L997.64 746.20 L1006.35 744.50 L1015.06 746.20 L1023.76 746.20 L1032.47 744.50 L1041.18 746.20 L1049.89 746.20 L1058.59 742.60 L1067.30 746.20 L1076.01 746.20 L1084.72 746.20 L1093.42 745.00 L1102.13 746.20 L1110.84 746.20 L1119.55 746.20 L1128.25 746.20 L1136.96 746.20 L1145.67 746.20 L1154.38 746.20 L1163.08 746.20 L1171.79 746.20 L1180.50 746.20" fill="none" stroke="#e8363c" stroke-width="1.4" stroke-linejoin="round" opacity="0.9"/>
<line x1="379.4" y1="746.7" x2="1181" y2="746.7" stroke="#5a1512" stroke-width="1.6" opacity="0.9"/>
</svg>
<div class="t" style="right:891.50px;top:475px;font-size:11.1px;color:#444;">50k</div>
<div class="t" style="right:891.50px;top:528px;font-size:11.1px;color:#444;">40k</div>
<div class="t" style="right:891.50px;top:582px;font-size:11.1px;color:#444;">30k</div>
<div class="t" style="right:891.50px;top:635px;font-size:11.1px;color:#444;">20k</div>
<div class="t" style="right:891.50px;top:689px;font-size:11.1px;color:#444;">10k</div>
<div class="t" style="left:178.00px;width:400px;text-align:center;top:751px;font-size:11.1px;color:#444;">1</div>
<div class="t" style="left:471.20px;top:751px;font-size:11.1px;color:#444;">August2019</div>
<div class="t" style="left:448.90px;width:400px;text-align:center;top:751px;font-size:11.1px;color:#444;">1</div>
<div class="t" style="left:731.30px;top:751px;font-size:11.1px;color:#444;">September2019</div>
<div class="t" style="left:719.20px;width:400px;text-align:center;top:751px;font-size:11.1px;color:#444;">1</div>
<div class="t" style="left:1008.50px;top:751px;font-size:11.1px;color:#444;">October2019</div>
<div class="t" style="left:336.40px;top:832px;font-size:18.55px;color:#2f86d8;font-weight:bold;">Monthly Launch Stats</div>
<div class="t" style="left:511.80px;top:876px;font-size:14.08px;color:#2f86c6;font-weight:bold;">September 2019</div>
<div class="t" style="left:954.40px;top:876px;font-size:14.08px;color:#2f86c6;font-weight:bold;">October 2019</div>
<svg class="abs" style="left:0;top:0" width="1265" height="1000">
<line x1="383.3" y1="899.1" x2="747.7" y2="899.1" stroke="#e1e1e1" stroke-width="1"/>
<line x1="383.3" y1="939.6" x2="747.7" y2="939.6" stroke="#e1e1e1" stroke-width="1"/>
<line x1="383.3" y1="980.2" x2="747.7" y2="980.2" stroke="#e1e1e1" stroke-width="1"/>
<line x1="817.2" y1="899.1" x2="1180.4" y2="899.1" stroke="#e1e1e1" stroke-width="1"/>
<line x1="817.2" y1="939.6" x2="1180.4" y2="939.6" stroke="#e1e1e1" stroke-width="1"/>
<line x1="817.2" y1="980.2" x2="1180.4" y2="980.2" stroke="#e1e1e1" stroke-width="1"/>
<rect x="461.8" y="936" width="63.1" height="70" fill="#7fc21f"/>
<line x1="383.3" y1="898.5" x2="383.3" y2="1000" stroke="#222" stroke-width="1.3"/>
<line x1="380.1" y1="899.1" x2="383.3" y2="899.1" stroke="#222" stroke-width="1.3"/>
<line x1="380.1" y1="919.4" x2="383.3" y2="919.4" stroke="#222" stroke-width="1.3"/>
<line x1="380.1" y1="939.6" x2="383.3" y2="939.6" stroke="#222" stroke-width="1.3"/>
<line x1="380.1" y1="959.9" x2="383.3" y2="959.9" stroke="#222" stroke-width="1.3"/>
<line x1="380.1" y1="980.2" x2="383.3" y2="980.2" stroke="#222" stroke-width="1.3"/>
<line x1="380.1" y1="1000.5" x2="383.3" y2="1000.5" stroke="#222" stroke-width="1.3"/>
<line x1="817.2" y1="898.5" x2="817.2" y2="1000" stroke="#222" stroke-width="1.3"/>
<line x1="814.0" y1="899.1" x2="817.2" y2="899.1" stroke="#222" stroke-width="1.3"/>
<line x1="814.0" y1="919.4" x2="817.2" y2="919.4" stroke="#222" stroke-width="1.3"/>
<line x1="814.0" y1="939.6" x2="817.2" y2="939.6" stroke="#222" stroke-width="1.3"/>
<line x1="814.0" y1="959.9" x2="817.2" y2="959.9" stroke="#222" stroke-width="1.3"/>
<line x1="814.0" y1="980.2" x2="817.2" y2="980.2" stroke="#222" stroke-width="1.3"/>
<line x1="814.0" y1="1000.5" x2="817.2" y2="1000.5" stroke="#222" stroke-width="1.3"/>
</svg>
<div class="t" style="right:886.30px;top:894px;font-size:11.1px;color:#444;">1m</div>
<div class="t" style="right:886.30px;top:935px;font-size:11.1px;color:#444;">800k</div>
<div class="t" style="right:886.30px;top:975px;font-size:11.1px;color:#444;">600k</div>
<div class="t" style="right:453.00px;top:894px;font-size:11.1px;color:#444;">2.5m</div>
<div class="t" style="right:453.00px;top:935px;font-size:11.1px;color:#444;">2m</div>
<div class="t" style="right:453.00px;top:975px;font-size:11.1px;color:#444;">1.5m</div>
<div class="t" style="left:293.20px;width:400px;text-align:center;top:924px;font-size:11.35px;color:#333;">813k</div></body></html>
